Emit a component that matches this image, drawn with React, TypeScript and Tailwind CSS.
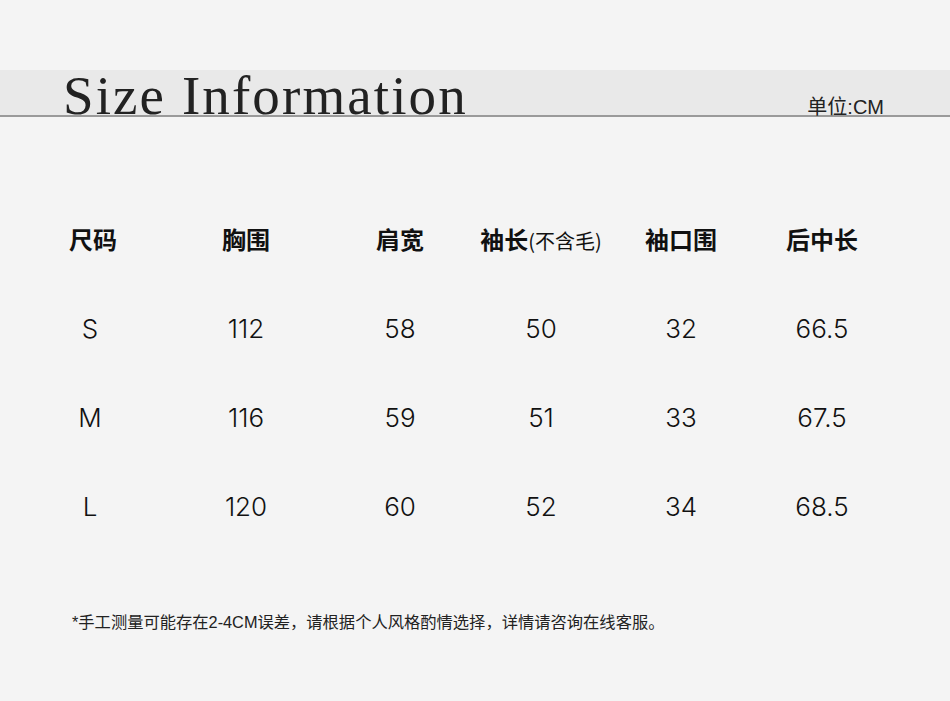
import React from 'react';

const HEADERS = ['尺码', '胸围', '肩宽', '袖长', '袖口围', '后中长'];

const ROWS = [
  ['S', '112', '58', '50', '32', '66.5'],
  ['M', '116', '59', '51', '33', '67.5'],
  ['L', '120', '60', '52', '34', '68.5'],
];

const GRID = 'grid grid-cols-[146px_160px_148px_134px_146px_136px] pl-[20px]';

export default function App() {
  return (
    <div className="w-[950px] h-[701px] bg-[#f4f4f4] overflow-hidden font-['Noto_Sans','Noto_Sans_CJK_SC',sans-serif] text-[#111]">
      {/* title band */}
      <div className="mt-[70px] h-[47px] bg-[#e9e9e9] border-b-2 border-[#9a9a9a] flex items-end justify-between pl-[63px] pr-[66px]">
        <h1 className="font-['Liberation_Serif',serif] text-[55px] leading-none text-[#222] tracking-[2.1px] translate-y-[8px]">
          Size Information
        </h1>
        <span className="text-[20px] leading-none text-[#222] translate-y-[2px] font-['Liberation_Sans','Noto_Sans_CJK_SC',sans-serif]">单位:CM</span>
      </div>

      {/* table */}
      <div className="mt-[104px]">
        <div className={GRID}>
          {HEADERS.map((h) => (
            <div key={h} className="text-center text-[24px] font-bold leading-[36px] font-['Noto_Sans_CJK_SC',sans-serif]">
              {h === '袖长' ? (
                <span>
                  袖长<span className="text-[20px] font-normal">(不含毛)</span>
                </span>
              ) : (
                h
              )}
            </div>
          ))}
        </div>
        <div className="mt-[51px] flex flex-col gap-[52px]">
          {ROWS.map((r) => (
            <div key={r[0]} className={GRID}>
              {r.map((c, i) => (
                <div key={i} className={`text-center text-[26px] leading-[37px] font-['Inter',sans-serif] font-light ${i === 0 ? 'pr-[6px]' : ''}`}>
                  {c}
                </div>
              ))}
            </div>
          ))}
        </div>
      </div>

      <p className="mt-[85px] pl-[72px] text-[16.3px] text-[#222] font-['Liberation_Sans','Noto_Sans_CJK_SC',sans-serif]">
        *手工测量可能存在2-4CM误差，请根据个人风格酌情选择，详情请咨询在线客服。
      </p>
    </div>
  );
}
